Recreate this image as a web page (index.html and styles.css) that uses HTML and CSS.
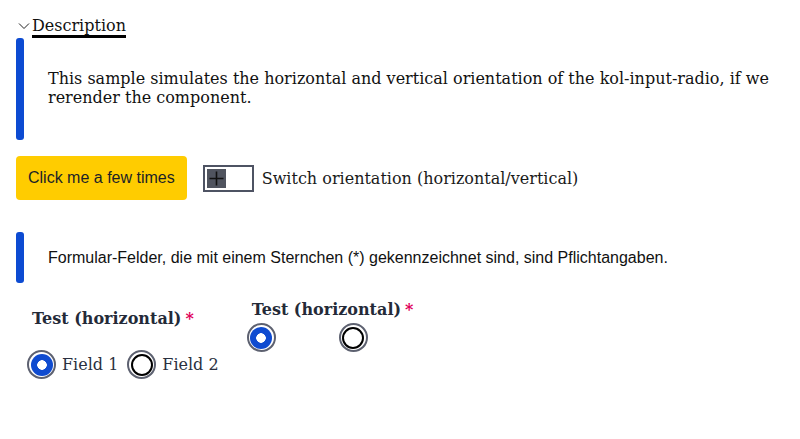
FILE: index.html
```html
<!DOCTYPE html>
<html lang="en">
<head>
<meta charset="utf-8">
<title>kol-input-radio orientation</title>
<link rel="stylesheet" href="styles.css">
</head>
<body class="page">
  <details class="desc" open>
    <summary class="desc-summary">
      <svg class="chev" width="16" height="10" viewBox="0 0 16 10"><polyline points="3,2.5 8,7.5 13,2.5" fill="none" stroke="#222" stroke-width="1"/></svg>
      <span class="desc-title">Description</span>
    </summary>
    <div class="callout callout-desc">
      <span class="callout-bar"></span>
      <p class="callout-text">This sample simulates the horizontal and vertical orientation of the kol-input-radio, if we rerender the component.</p>
    </div>
  </details>

  <div class="controls">
    <button class="btn" type="button">Click me a few times</button>
    <label class="switch-row">
      <span class="switch">
        <span class="knob">
          <svg width="19" height="19" viewBox="0 0 19 19"><path d="M9.5 2.5v14M2.5 9.5h14" stroke="#111" stroke-width="1.6" fill="none"/></svg>
        </span>
      </span>
      <span class="switch-label">Switch orientation (horizontal/vertical)</span>
    </label>
  </div>

  <div class="callout callout-note">
    <span class="callout-bar"></span>
    <p class="callout-text sans">Formular-Felder, die mit einem Sternchen (*) gekennzeichnet sind, sind Pflichtangaben.</p>
  </div>

  <div class="forms">
    <fieldset class="group group-one">
      <legend class="group-label">Test (horizontal)<span class="req">*</span></legend>
      <div class="options">
        <label class="option"><span class="radio checked"><span class="radio-inner"></span></span><span class="option-text">Field 1</span></label>
        <label class="option"><span class="radio"><span class="radio-inner"></span></span><span class="option-text">Field 2</span></label>
      </div>
    </fieldset>
    <fieldset class="group group-two">
      <legend class="group-label">Test (horizontal)<span class="req">*</span></legend>
      <div class="options options-grid">
        <span class="radio checked"><span class="radio-inner"></span></span>
        <span class="radio"><span class="radio-inner"></span></span>
      </div>
    </fieldset>
  </div>
</body>
</html>
```

FILE: styles.css
```css
* { box-sizing: border-box; }

html, body { margin: 0; background: #fff; }

.page {
  padding: 16px;
  font-family: "DejaVu Serif", serif;
  font-size: 16px;
  color: #111;
}

.desc { margin: 0; }

.desc-summary {
  list-style: none;
  display: flex;
  align-items: flex-start;
  height: 22px;
  cursor: pointer;
}
.desc-summary::-webkit-details-marker { display: none; }

.chev { display: block; margin-top: 5px; }

.desc-title {
  line-height: 19px;
  border-bottom: 3px solid #000;
}

.callout {
  display: flex;
  align-items: stretch;
}

.callout-bar {
  flex: 0 0 8px;
  width: 8px;
  background: #0d4bd2;
  border-radius: 3px;
}

.callout-text {
  margin: 0;
  padding-left: 24px;
  line-height: 19px;
}

.callout-desc { height: 102px; }
.callout-desc .callout-text { padding-top: 31px; }

.sans { font-family: "Liberation Sans", Arial, sans-serif; }

.controls {
  display: flex;
  align-items: center;
  gap: 16px;
  margin-top: 16px;
}

.btn {
  height: 44px;
  padding: 0 12px;
  border: 0;
  border-radius: 4px;
  background: #ffcc00;
  color: #1b1f27;
  font-family: "Liberation Sans", Arial, sans-serif;
  font-size: 16px;
}

.switch-row {
  display: flex;
  align-items: center;
  gap: 8px;
}

.switch {
  display: flex;
  width: 51px;
  height: 27px;
  border: 2px solid #4e5363;
  padding: 2px;
}

.knob {
  display: block;
  width: 19px;
  height: 19px;
  background: #50545f;
}
.knob svg { display: block; }

.switch-label { color: #1a1a1a; }

.callout-note {
  margin-top: 32px;
  height: 51px;
}
.callout-note .callout-text {
  align-self: center;
  line-height: 18px;
  color: #111;
}

.forms {
  display: flex;
  align-items: flex-start;
  gap: 28px;
  margin-top: 17px;
  padding-left: 11px;
}

.group {
  margin: 0;
  padding: 0;
  border: 0;
  min-width: 0;
}

.group-label {
  padding: 0 0 0 5px;
  font-weight: bold;
  color: #242a38;
  line-height: 19px;
}

.req {
  color: #e0005a;
  margin-left: 4px;
}

.group-one { margin-top: 9px; }
.group-one .options { margin-top: 22px; display: flex; gap: 9px; }
.group-two .options { margin-top: 4px; }

.option {
  display: flex;
  align-items: center;
  gap: 6px;
  color: #2a3040;
}

.options-grid {
  display: grid;
  grid-template-columns: 92px 92px;
}

.radio {
  display: block;
  width: 29px;
  height: 29px;
  border-radius: 50%;
  border: 2px solid #5d6170;
  padding: 1.5px;
  background: #fff;
}

.radio-inner {
  display: block;
  width: 22px;
  height: 22px;
  border-radius: 50%;
  border: 2px solid #000;
  background: #fff;
}

.radio.checked .radio-inner {
  border: 0;
  background: #0f4bd0 radial-gradient(circle, #fff 0 4.5px, transparent 5px);
}
```
